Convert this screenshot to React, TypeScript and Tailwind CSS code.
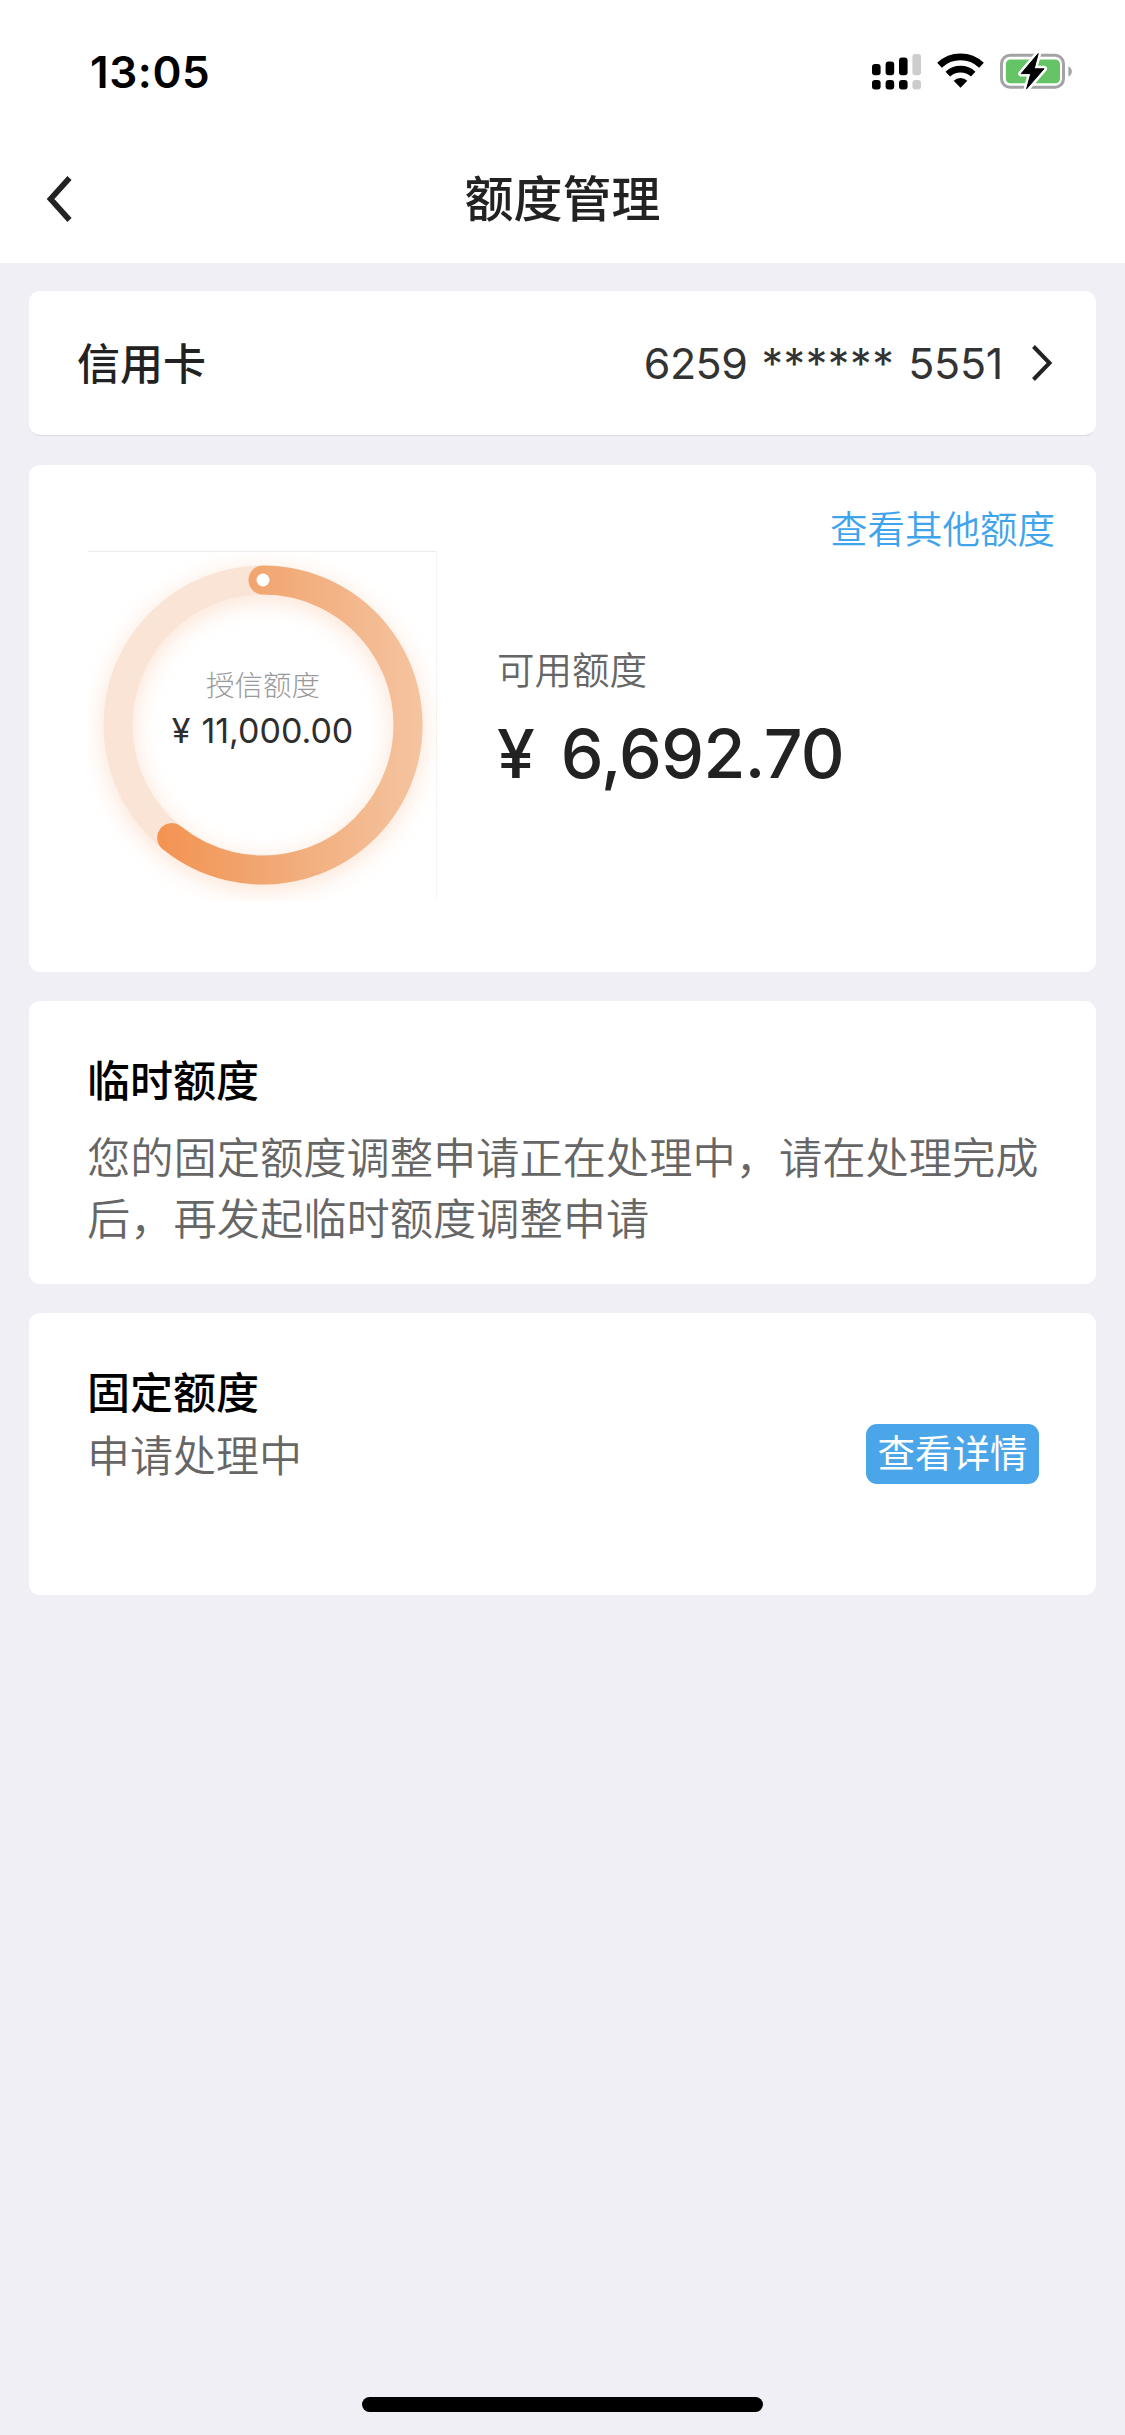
const NOTICE = '您的固定额度调整申请正在处理中\uff0c请在处理完成后\uff0c再发起临时额度调整申请';

const TOTAL = 11000;
const AVAILABLE = 6692.7;

function StatusIcons() {
  return (
    <svg width="204" height="40" viewBox="870 50 204 40" fill="none">
      {/* Dual SIM signal */}
      <g fill="#000">
        <rect x="872" y="64" width="8.6" height="11.2" rx="3" />
        <rect x="885.6" y="61.4" width="8.6" height="13.8" rx="3" />
        <rect x="899" y="57.6" width="8.6" height="17.6" rx="3" />
        <rect x="872" y="80" width="8.6" height="9.4" rx="3" />
        <rect x="885.6" y="80" width="8.6" height="9.4" rx="3" />
        <rect x="899" y="80" width="8.6" height="9.4" rx="3" />
      </g>
      <g fill="#ccc">
        <rect x="912.4" y="54" width="8.6" height="21.2" rx="3" />
        <rect x="912.4" y="80" width="8.6" height="9.4" rx="3" />
      </g>

      {/* Wifi */}
      <path d="M939.5 65.2a30.5 30.5 0 0 1 42 0" stroke="#000" strokeWidth="6.8" />
      <path d="M947.8 74.2a18.4 18.4 0 0 1 25.4 0" stroke="#000" strokeWidth="6.6" />
      <path d="M960.5 87.8l-6.8-7a9.8 9.8 0 0 1 13.6 0z" fill="#000" />

      {/* Battery */}
      <rect x="1001.5" y="55.3" width="62" height="32" rx="8.5" stroke="#a3a3a5" strokeWidth="3" />
      <path d="M1068.4 66.6c2.2.8 3.4 2.7 3.4 5s-1.2 4.2-3.4 5z" fill="#a3a3a5" />
      <rect x="1005.8" y="59.6" width="54.2" height="23.6" rx="4.5" fill="#65c466" />
      <path
        d="M1038.2 53.6L1021.2 73.6h9.6l-4.2 15.2 17.4-20h-9.8z"
        fill="#fff"
        stroke="#fff"
        strokeWidth="6"
        strokeLinejoin="round"
      />
      <path
        d="M1038.2 53.6L1021.2 73.6h9.6l-4.2 15.2 17.4-20h-9.8z"
        fill="#000"
        stroke="#000"
        strokeLinejoin="round"
      />
    </svg>
  );
}

function LimitRing() {
  const r = 145;
  const angle = (AVAILABLE / TOTAL) * Math.PI * 2;
  const endX = 175 + r * Math.sin(angle);
  const endY = 173 - r * Math.cos(angle);

  return (
    <svg className="absolute inset-0" width="349" height="349" viewBox="0 0 349 349" fill="none">
      <defs>
        <linearGradient id="ring" gradientUnits="userSpaceOnUse" x1="70" y1="0" x2="334" y2="0">
          <stop offset="0" stopColor="#f39352" />
          <stop offset="0.4" stopColor="#f1a772" />
          <stop offset="1" stopColor="#f5c4a0" />
        </linearGradient>
        <filter id="glow" x="-20%" y="-20%" width="140%" height="140%">
          <feGaussianBlur stdDeviation="12" />
        </filter>
      </defs>
      <circle cx="175" cy="178" r={r} stroke="#fbd3b8" strokeOpacity="0.65" strokeWidth="29" filter="url(#glow)" />
      <circle cx="175" cy="173" r={r} stroke="#fae4d6" strokeWidth="29" />
      <path
        d={`M175 28A${r} ${r} 0 1 1 ${endX} ${endY}`}
        stroke="url(#ring)"
        strokeWidth="29"
        strokeLinecap="round"
      />
      <circle cx="175" cy="28" r="6.5" fill="#fff" />
    </svg>
  );
}

export default function App() {
  return (
    <div className="flex h-[2435px] w-[1125px] flex-col bg-[#efeff5] font-['Inter','Noto_Sans_CJK_SC',sans-serif] text-[#222]">
      <div className="h-[263px] bg-white">
        <div className="flex h-[136px] items-start justify-between pt-[50px] pr-[51px] pl-[90px]">
          <span className="text-[44px] leading-[44px] font-semibold tracking-[0.6px] text-black">13:05</span>
          <StatusIcons />
        </div>
        <header className="flex h-[126px] items-center justify-between px-[46px]">
          <svg width="28" height="48" viewBox="0 0 28 48" fill="none">
            <path d="M23.5 3L4.5 24l19 21" stroke="#222" strokeWidth="5.6" />
          </svg>
          <h1 className="pt-[2px] text-[49px] leading-[60px] font-medium">额度管理</h1>
          <span className="w-7" />
        </header>
      </div>

      <main className="flex flex-col gap-[29px] px-[29px] pt-[28px]">
        <section className="flex h-[145px] items-center justify-between rounded-[11px] border-b border-[#d9dae2] bg-white pr-[42px] pl-[48px]">
          <h2 className="pt-[2px] text-[43px] leading-[60px] font-medium">信用卡</h2>
          <div className="flex items-center text-[43px] leading-[60px] font-normal text-[#333]">
            <span className="tracking-[-0.5px]">6259</span>
            <span className="ml-[14px] tracking-[0.6px]">******</span>
            <span className="ml-[14px] tracking-[-0.3px]">5551</span>
            <svg className="ml-[27px]" width="24" height="38" viewBox="0 0 24 38" fill="none">
              <path d="M3.5 2.5L19.5 19l-16 16.5" stroke="#222" strokeWidth="4" />
            </svg>
          </div>
        </section>

        <section className="flex h-[507px] flex-col rounded-[11px] bg-white pr-[42px] pl-[59px]">
          <a className="mt-[38px] mr-[-1px] self-end text-[37.5px] leading-[54px] font-[350] text-[#3fa4ec]">查看其他额度</a>
          <div className="mt-[-6px] flex">
            <div className="relative flex h-[349px] w-[349px] flex-col items-center border-t border-r border-t-[#ebebeb] border-r-[#f5f5f5]">
              <LimitRing />
              <span className="relative mt-[114px] ml-[2px] text-[28.5px] leading-[40px] font-light text-[#999]">授信额度</span>
              <div className="relative mt-[1px] ml-[1px] flex text-[34px] leading-[48px] font-normal text-[#2e2e2e]">
                <span>¥</span>
                <span className="ml-[11px]">11,000.00</span>
              </div>
            </div>
            <div className="ml-[60px] flex flex-col pt-[93px]">
              <span className="text-[37.5px] leading-[54px] font-[350] text-[#666]">可用额度</span>
              <div className="mt-[15px] flex text-[68px] leading-[80px] font-medium">
                <span>¥</span>
                <span className="ml-[26px] tracking-[-0.6px]">6,692.70</span>
              </div>
            </div>
          </div>
        </section>

        <section className="h-[283px] rounded-[11px] bg-white px-[58px] pt-[50px]">
          <h2 className="text-[43px] leading-[60px] font-medium text-black">临时额度</h2>
          <p className="mt-[17px] mr-[-2px] text-[43.25px] leading-[60.5px] font-[350] text-[#666]">{NOTICE}</p>
        </section>

        <section className="h-[282px] rounded-[11px] bg-white px-[58px] pt-[50px]">
          <h2 className="text-[43px] leading-[60px] font-medium text-black">固定额度</h2>
          <div className="flex items-start justify-between">
            <p className="mt-[3px] text-[43px] leading-[60px] font-[350] text-[#666]">申请处理中</p>
            <button className="mt-[1px] mr-[-1px] h-[60px] w-[173px] rounded-[11px] bg-[#4aa6e8] text-[37.5px] leading-[60px] text-white">
              查看详情
            </button>
          </div>
        </section>
      </main>

      {/* Home indicator */}
      <div className="mx-auto mt-auto mb-[23px] h-[15px] w-[401px] rounded-full bg-black" />
    </div>
  );
}
